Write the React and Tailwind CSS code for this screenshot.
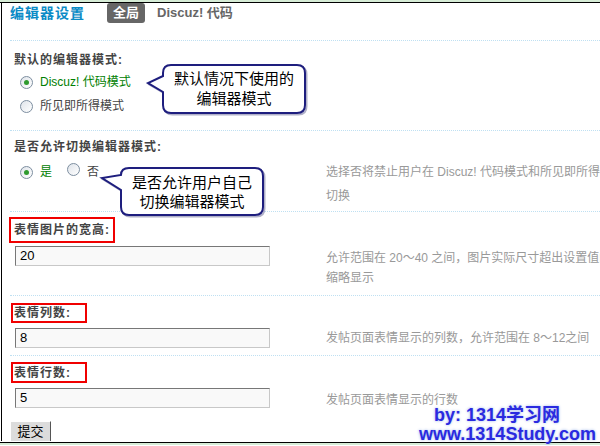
import React from 'react';

const Radio = ({ checked }) => (
  <span className="relative inline-flex h-[13px] w-[13px] items-center justify-center rounded-full border border-[#7d8ea0] bg-gradient-to-br from-[#dfe4ea] to-white">
    {checked && <span className="h-[5px] w-[5px] rounded-full bg-[#2e9a2e]" />}
  </span>
);

const Input = ({ value }) => (
  <div className="h-[20px] w-[255px] border border-t-[#777] border-l-[#777] border-r-[#c8c8c8] border-b-[#c8c8c8] bg-[#f9f9f9] pl-[4px] text-[13px] leading-[18px] text-black">
    {value}
  </div>
);

const Dots = () => <div className="border-b border-dotted border-[#bfe0f2]" />;

export default function App() {
  return (
    <div className="relative h-[446px] w-[600px] overflow-hidden bg-white font-['Liberation_Sans','Noto_Sans_CJK_SC',sans-serif] text-[12px]">
      <div className="h-[2px] bg-[#d6ecd6]" />
      <div className="h-px bg-black" />

      <div className="ml-px h-[438px] border-l border-black">
        <div className="ml-[8px]">
          {/* header */}
          <div className="flex h-[37px] items-start">
            <div className="flex h-[20px] items-center">
              <span className="text-[14px] font-bold tracking-[1px] text-[#0b8bc6]">编辑器设置</span>
              <span className="ml-[22px] flex h-[20px] w-[38px] items-center justify-center rounded-[3px] bg-[#666] text-[13px] font-bold text-white">全局</span>
              <span className="ml-[12px] text-[13px] font-bold text-[#666]">Discuz! 代码</span>
            </div>
          </div>
          <Dots />

          {/* section 1 */}
          <div className="h-[89px] pl-[4px] pt-[11px]">
            <div className="h-[16px] text-[12px] font-bold leading-[16px] tracking-[1px] text-[#444]">默认的编辑器模式:</div>
            <div className="mt-[2px] flex h-[24px] items-center pl-[6px]">
              <Radio checked />
              <span className="ml-[7px] text-[#008000]">Discuz! 代码模式</span>
            </div>
            <div className="flex h-[24px] items-center pl-[6px]">
              <Radio />
              <span className="ml-[7px] text-[#444]">所见即所得模式</span>
            </div>
          </div>
          <Dots />

          {/* section 2 */}
          <div className="h-[80px] pl-[4px] pt-[8px]">
            <div className="h-[16px] text-[12px] font-bold leading-[16px] tracking-[1px] text-[#444]">是否允许切换编辑器模式:</div>
            <div className="mt-[5px] flex">
              <div className="flex h-[24px] w-[312px] shrink-0 items-center pl-[6px]">
                <Radio checked />
                <span className="ml-[7px] text-[#008000]">是</span>
                <span className="ml-[15px]"><Radio /></span>
                <span className="ml-[7px] text-[#444]">否</span>
              </div>
              <div className="whitespace-nowrap leading-[24px] text-[#999]">
                <div>选择否将禁止用户在 Discuz! 代码模式和所见即所得模式之间</div>
                <div>切换</div>
              </div>
            </div>
          </div>
          <Dots />

          {/* section 3 */}
          <div className="h-[83px] pt-[5px]">
            <div className="-ml-px flex h-[26px] w-[106px] items-center border-2 border-[#f00000] pl-[3px] font-bold tracking-[1px] text-[#444]">表情图片的宽高:</div>
            <div className="mt-[3px] flex">
              <div className="w-[316px] shrink-0 pl-[5px]">
                <Input value="20" />
              </div>
              <div className="mt-[2px] whitespace-nowrap leading-[20px] text-[#999]">
                <div>允许范围在 20～40 之间，图片实际尺寸超出设置值的将会</div>
                <div>缩略显示</div>
              </div>
            </div>
          </div>
          <Dots />

          {/* section 4 */}
          <div className="h-[59px] pt-[7px]">
            <div className="ml-px flex h-[20px] w-[76px] items-center border-2 border-[#f00000] pl-[1px] font-bold tracking-[1px] text-[#444]">表情列数:</div>
            <div className="mt-[5px] flex">
              <div className="w-[316px] shrink-0 pl-[5px]">
                <Input value="8" />
              </div>
              <div className="whitespace-nowrap leading-[20px] text-[#999]">发帖页面表情显示的列数，允许范围在 8～12之间</div>
            </div>
          </div>
          <Dots />

          {/* section 5 */}
          <div className="pt-[6px]">
            <div className="ml-px flex h-[21px] w-[76px] items-center border-2 border-[#f00000] pl-[1px] font-bold tracking-[1px] text-[#444]">表情行数:</div>
            <div className="mt-[5px] flex">
              <div className="w-[316px] shrink-0 pl-[5px]">
                <Input value="5" />
              </div>
              <div className="mt-[2px] whitespace-nowrap leading-[20px] text-[#999]">发帖页面表情显示的行数</div>
            </div>
            <button className="mt-[11px] flex h-[21px] w-[41px] items-center justify-center border border-t-white border-l-white border-r-[#555] border-b-[#555] bg-[#dcdcdc] text-[13px] text-black">
              提交
            </button>
          </div>
        </div>
      </div>

      <div className="h-px bg-white" />
      <div className="h-px bg-black" />
      <div className="h-[2px] bg-[#d6ecd6]" />

      {/* callouts */}
      <svg className="pointer-events-none absolute left-0 top-0" width="600" height="446">
        <path d="M171,65 H297 Q305,65 305,73 V105 Q305,113 297,113 H171 Q163,113 163,105 V92 L148,83 L163,76 V73 Q163,65 171,65 Z" fill="none" stroke="#b0b0c8" strokeWidth="2" transform="translate(1.5,1.5)" />
        <path d="M171,65 H297 Q305,65 305,73 V105 Q305,113 297,113 H171 Q163,113 163,105 V92 L148,83 L163,76 V73 Q163,65 171,65 Z" fill="white" stroke="#1e1e7e" strokeWidth="2" />
        <path d="M129,168 H255 Q263,168 263,176 V207 Q263,215 255,215 H129 Q121,215 121,207 V190 L102,178 L121,175 Q121,168 129,168 Z" fill="none" stroke="#b0b0c8" strokeWidth="2" transform="translate(1.5,1.5)" />
        <path d="M129,168 H255 Q263,168 263,176 V207 Q263,215 255,215 H129 Q121,215 121,207 V190 L102,178 L121,175 Q121,168 129,168 Z" fill="white" stroke="#1e1e7e" strokeWidth="2" />
      </svg>
      <div className="absolute left-[163px] top-[68px] w-[142px] text-center font-['Noto_Sans_CJK_SC',sans-serif] text-[15px] leading-[20px] text-black">
        默认情况下使用的<br />编辑器模式
      </div>
      <div className="absolute left-[121px] top-[172px] w-[142px] text-center font-['Noto_Sans_CJK_SC',sans-serif] text-[15px] leading-[19px] text-black">
        是否允许用户自己<br />切换编辑器模式
      </div>

      {/* watermark */}
      <div className="absolute left-[434px] top-[405px] whitespace-nowrap text-[18px] font-bold leading-[20px] text-[#2a2ae0] [text-shadow:0_0_3px_#9cb4e8]">
        by: 1314学习网
      </div>
      <div className="absolute left-[419px] top-[424px] whitespace-nowrap text-[18px] font-bold leading-[20px] text-[#2a2ae0] [text-shadow:0_0_3px_#9cb4e8]">
        www.1314Study.com
      </div>
    </div>
  );
}
